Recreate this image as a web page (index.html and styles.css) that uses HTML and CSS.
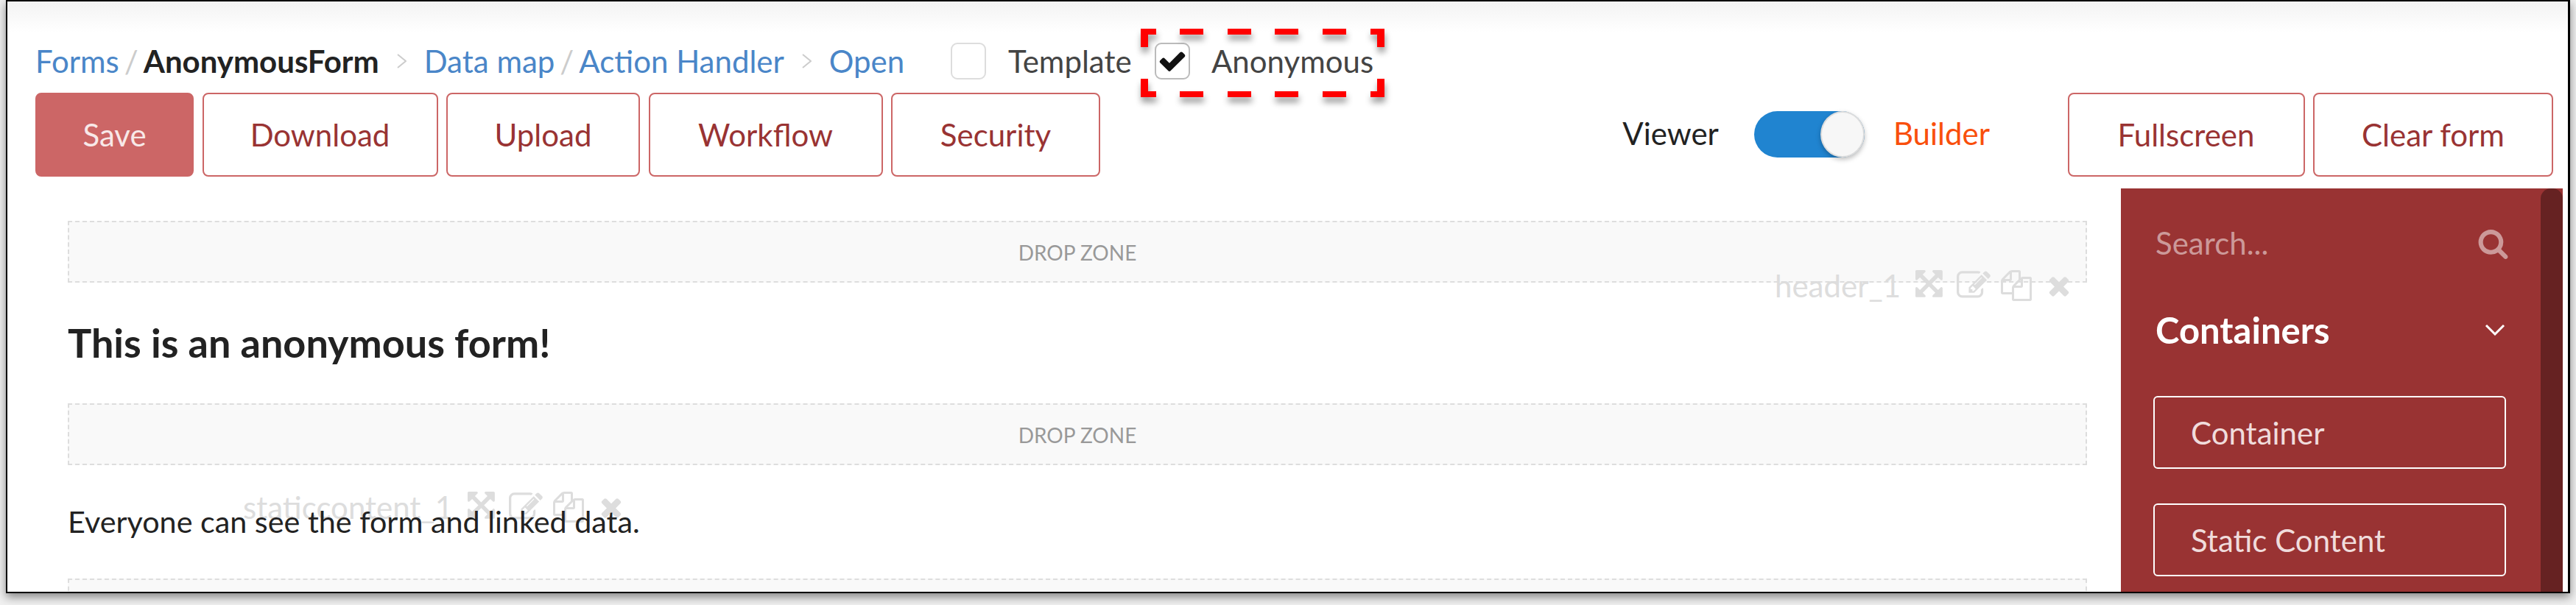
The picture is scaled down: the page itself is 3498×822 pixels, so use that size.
FILE: index.html
```html
<!DOCTYPE html>
<html lang="en">
<head>
<meta charset="utf-8">
<title>AnonymousForm</title>
<link rel="stylesheet" href="styles.css">
</head>
<body>
<svg class="defs" width="0" height="0" aria-hidden="true">
  <symbol id="i-expand" viewBox="0 0 1792 1792"><path d="M1283 413l-355 355 355 355 144-144q29-31 70-14 39 17 39 59v448q0 26-19 45t-45 19h-448q-42 0-59-40-17-39 14-69l144-144-355-355-355 355 144 144q31 30 14 69-17 40-59 40h-448q-26 0-45-19t-19-45v-448q0-42 40-59 39-17 69 14l144 144 355-355-355-355-144 144q-19 19-45 19-12 0-24-5-40-17-40-59v-448q0-26 19-45t45-19h448q42 0 59 40 17 39-14 69l-144 144 355 355 355-355-144-144q-31-30-14-69 17-40 59-40h448q26 0 45 19t19 45v448q0 42-39 59-13 5-25 5-26 0-45-19z"/></symbol>
  <symbol id="i-edit" viewBox="0 0 1792 1792"><path d="M888 1184l116-116-152-152-116 116v56h96v96h56zm440-720q-16-16-33 1l-350 350q-17 17-1 33t33-1l350-350q17-17 1-33zm80 594v190q0 119-84.5 203.5t-203.5 84.5h-832q-119 0-203.5-84.5t-84.5-203.5v-832q0-119 84.5-203.5t203.5-84.5h832q63 0 117 25 15 7 18 23 3 17-9 29l-49 49q-14 14-32 8-23-6-45-6h-832q-66 0-113 47t-47 113v832q0 66 47 113t113 47h832q66 0 113-47t47-113v-126q0-13 9-22l64-64q15-15 35-7t20 29zm-96-738l288 288-672 672h-288v-288zm444 132l-92 92-288-288 92-92q28-28 68-28t68 28l152 152q28 28 28 68t-28 68z"/></symbol>
  <symbol id="i-copy" viewBox="0 0 1792 1792"><path d="M1696 384q40 0 68 28t28 68v1216q0 40-28 68t-68 28h-960q-40 0-68-28t-28-68v-288h-544q-40 0-68-28t-28-68v-672q0-40 20-88t48-76l408-408q28-28 76-48t88-20h416q40 0 68 28t28 68v328q68-40 128-40h416zm-544 213l-299 299h299v-299zm-640-384l-299 299h299v-299zm196 647l316-316v-416h-384v416q0 40-28 68t-68 28h-416v640h512v-256q0-40 20-88t48-76zm956 804v-1152h-384v416q0 40-28 68t-68 28h-416v640h896z"/></symbol>
  <symbol id="i-close" viewBox="0 0 1792 1792"><path d="M1490 1322q0 40-28 68l-136 136q-28 28-68 28t-68-28l-294-294-294 294q-28 28-68 28t-68-28l-136-136q-28-28-28-68t28-68l294-294-294-294q-28-28-28-68t28-68l136-136q28-28 68-28t68 28l294 294 294-294q28-28 68-28t68 28l136 136q28 28 28 68t-28 68l-294 294 294 294q28 28 28 68z"/></symbol>
  <symbol id="i-sep" viewBox="0 0 13 20"><path d="M1 1l11 9L1 19"/></symbol>
</svg>
<div class="frame">
  <div class="crumbs-row">
    <nav class="crumbs">
      <a class="link">Forms</a><span class="slash">/</span><b class="current">AnonymousForm</b>
      <svg class="sep"><use href="#i-sep"/></svg>
      <a class="link">Data map</a><span class="slash">/</span><a class="link">Action Handler</a>
      <svg class="sep"><use href="#i-sep"/></svg>
      <a class="link">Open</a>
    </nav>
    <label class="check check-template"><span class="box"></span><span>Template</span></label>
    <label class="check check-anon">
      <span class="box box-on"><svg class="tick" viewBox="0 0 1792 1792"><path d="M1671 566q0 40-28 68l-724 724-136 136q-28 28-68 28t-68-28l-136-136-362-362q-28-28-28-68t28-68l136-136q28-28 68-28t68 28l294 295 656-657q28-28 68-28t68 28l136 136q28 28 28 68z"/></svg></span>
      <span>Anonymous</span>
    </label>
  </div>
  <div class="tool-row">
    <button class="btn btn-primary btn-save">Save</button>
    <button class="btn btn-download">Download</button>
    <button class="btn btn-upload">Upload</button>
    <button class="btn btn-workflow">Workflow</button>
    <button class="btn btn-security">Security</button>
    <div class="mode">
      <span class="mode-viewer">Viewer</span>
      <span class="switch"><span class="thumb"></span></span>
      <span class="mode-builder">Builder</span>
    </div>
    <button class="btn btn-fullscreen">Fullscreen</button>
    <button class="btn btn-clear">Clear form</button>
  </div>
  <div class="workspace">
    <main class="canvas">
      <div class="dropzone">DROP ZONE</div>
      <section class="block block-header">
        <div class="tools tools-header">
          <span class="tools-name">header_1</span>
          <svg class="ti ti-expand"><use href="#i-expand"/></svg>
          <svg class="ti ti-edit"><use href="#i-edit"/></svg>
          <svg class="ti ti-copy"><use href="#i-copy"/></svg>
          <svg class="ti ti-close"><use href="#i-close"/></svg>
        </div>
        <h2 class="form-title">This is an anonymous form!</h2>
      </section>
      <div class="dropzone">DROP ZONE</div>
      <section class="block block-static">
        <div class="tools tools-static">
          <span class="tools-name">staticcontent_1</span>
          <svg class="ti ti-expand"><use href="#i-expand"/></svg>
          <svg class="ti ti-edit"><use href="#i-edit"/></svg>
          <svg class="ti ti-copy"><use href="#i-copy"/></svg>
          <svg class="ti ti-close"><use href="#i-close"/></svg>
        </div>
        <p class="form-text">Everyone can see the form and linked data.</p>
      </section>
      <div class="dropzone dropzone-cut"></div>
    </main>
    <aside class="palette">
      <div class="palette-body">
        <div class="search">
          <span class="search-text">Search...</span>
          <svg class="search-icon" viewBox="0 0 1792 1792"><path d="M1216 832q0-185-131.5-316.5t-316.5-131.5-316.5 131.5-131.5 316.5 131.5 316.5 316.5 131.5 316.5-131.5 131.5-316.5zm512 832q0 52-38 90t-90 38q-54 0-90-38l-343-342q-179 124-399 124-143 0-273.5-55.5t-225-150-150-225-55.5-273.5 55.5-273.5 150-225 225-150 273.5-55.5 273.5 55.5 225 150 150 225 55.5 273.5q0 220-124 399l343 343q37 37 37 90z"/></svg>
        </div>
        <div class="group-head">
          <span>Containers</span>
          <svg class="chevron" viewBox="0 0 28 16"><path d="M2 2l12 12L26 2"/></svg>
        </div>
        <div class="palette-item">Container</div>
        <div class="palette-item">Static Content</div>
      </div>
      <div class="scrollbar"></div>
    </aside>
  </div>
  <svg class="callout" viewBox="0 0 331 93" aria-hidden="true">
    <path d="M0 0h21v8H10v17H0zM331 0h-19v8h9v17h10zM0 93h21v-8H10V68H0zM331 93h-19v-8h9V68h10zM53 0h32v8H53zM118 0h32v8h-32zM182 0h32v8h-32zM247 0h32v8h-32zM53 85h32v8H53zM118 85h32v8h-32zM182 85h32v8h-32zM247 85h32v8h-32z"/>
  </svg>
</div>
</body>
</html>
```

FILE: styles.css
```css
* { box-sizing: border-box; }
html, body { margin: 0; height: 100%; }
body {
  background: #f0f0f0;
  font-family: "Lato", "Liberation Sans", sans-serif;
  font-size: 42px;
  overflow: hidden;
}
.defs { position: absolute; }
.frame {
  position: relative;
  width: 3482px;
  height: 806px;
  margin-left: 8px;
  border: solid #000;
  border-width: 2px 3px 2px 2px;
  background: linear-gradient(#f3f3f3, #fff 42px);
  box-shadow: 0 5px 12px rgba(0, 0, 0, .45);
  overflow: hidden;
}
.crumbs-row {
  display: flex;
  align-items: center;
  height: 106px;
  padding: 56px 0 0 38px;
}
.crumbs { display: flex; align-items: baseline; color: #222; width: 1243px; line-height: 50px; white-space: pre; }
.link { color: #4a86c8; }
.slash { color: #ccc; margin: 0 7px; }
.current { color: #222; font-weight: 700; }
.sep { width: 13px; height: 20px; margin: 0 24px; align-self: center; fill: none; stroke: #ccc; stroke-width: 2; }
.check { display: flex; align-items: center; color: #444; line-height: 50px; }
.check-template { width: 277px; }
.check-anon { gap: 29px; }
.check-template .box { margin-right: 30px; }
.box {
  flex: none;
  width: 48px;
  height: 50px;
  border: 2px solid #ddd;
  border-radius: 9px;
  background: #fff;
  display: flex;
  align-items: center;
  justify-content: center;
}
.box-on { border-color: #bbb; }
.tick { width: 40px; height: 40px; fill: #111; }
.tool-row {
  display: flex;
  gap: 11.5px;
  height: 114px;
  margin-top: 18px;
  padding: 0 20px 0 38px;
}
.btn {
  flex: none;
  font: inherit;
  height: 114px;
  padding: 0;
  border: 2px solid #c66;
  border-radius: 8px;
  background: #fff;
  color: #933;
  white-space: nowrap;
}
.btn-primary { background: #c66; color: #f8e8e8; }
.btn-save { width: 215px; }
.btn-download { width: 320px; }
.btn-upload { width: 263px; }
.btn-workflow { width: 318px; }
.btn-security { width: 284px; }
.btn-fullscreen { width: 322px; }
.btn-clear { width: 326px; }
.mode {
  display: flex;
  align-items: center;
  margin: 0 94px 4px auto;
}
.mode-viewer { color: #222; margin-right: 48px; }
.mode-builder { color: #f94f0c; margin-left: 39px; }
.switch {
  position: relative;
  display: block;
  width: 150px;
  height: 63px;
  margin-top: 2px;
  border-radius: 32px;
  background: #2084d0;
}
.thumb {
  position: absolute;
  top: 0;
  right: 0;
  width: 60px;
  height: 63px;
  border-radius: 50%;
  background: #f7f7f7;
  border: 2px solid #ddd;
  box-shadow: 0 3px 6px rgba(0, 0, 0, .25);
}
.workspace {
  display: flex;
  height: 548px;
  margin-top: 16px;
  padding-right: 7px;
}
.canvas { flex: 1; min-width: 0; padding: 44px 46px 0 82px; overflow: hidden; }
.dropzone {
  height: 84px;
  border: 2px dashed #ddd;
  background: #f9f9f9;
  color: #999;
  font-size: 28px;
  line-height: 82px;
  text-align: center;
}
.dropzone-cut { height: 60px; }
.block { position: relative; height: 164px; }
.block-static { height: 154px; }
.tools {
  position: absolute;
  display: flex;
  align-items: center;
  color: #ddd;
  line-height: 44px;
}
.tools-header { top: -19px; left: 2318px; }
.tools-static { top: 34px; left: 238px; }
.tools-name { margin-right: 20px; }
.ti { flex: none; fill: #ddd; }
.ti-expand { width: 43px; height: 43px; margin-right: 13px; }
.ti-edit { width: 46px; height: 46px; margin-right: 14px; }
.ti-copy { width: 42px; height: 42px; margin-right: 17px; }
.ti-close { width: 40px; height: 40px; }
.form-title {
  position: relative;
  margin: 0;
  padding-top: 53px;
  color: #222;
  font-size: 54px;
  font-weight: 700;
  line-height: 58px;
}
.form-text {
  position: relative;
  margin: 0;
  padding-top: 52px;
  color: #222;
  font-size: 41.3px;
  line-height: 48px;
}
.palette {
  flex: none;
  display: flex;
  width: 600px;
  background: #933;
}
.palette-body { flex: 1; min-width: 0; padding: 0 47px; }
.scrollbar { flex: none; width: 30px; background: #622; border-radius: 14px 14px 0 0; }
.search {
  display: flex;
  align-items: center;
  justify-content: space-between;
  height: 48px;
  margin-top: 50px;
  color: #c99;
}
.search-icon { width: 43px; height: 43px; margin-right: -4px; fill: #c99; }
.group-head {
  display: flex;
  align-items: center;
  justify-content: space-between;
  height: 60px;
  margin-top: 64px;
  padding-right: 1px;
  color: #fff;
  font-size: 49px;
  font-weight: 700;
}
.chevron { width: 28px; height: 16px; fill: none; stroke: #fff; stroke-width: 3; }
.palette-item {
  width: 479px;
  height: 99px;
  margin: 0 0 47px -3px;
  padding-left: 49px;
  border: 2px solid #fff;
  border-radius: 6px;
  color: #f0dcdc;
  line-height: 96px;
}
.group-head + .palette-item { margin-top: 60px; }
.callout {
  position: absolute;
  left: 1539px;
  top: 37px;
  width: 331px;
  height: 93px;
  overflow: visible;
  fill: #f00;
  filter: drop-shadow(1px 7px 4px rgba(0, 0, 0, .4));
}
```
